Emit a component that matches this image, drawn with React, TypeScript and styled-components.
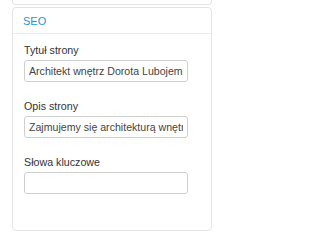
import React from "react"
import styled, { createGlobalStyle } from "styled-components"

const GlobalStyle = createGlobalStyle`
    html, body {
        margin: 0;
        padding: 0;
        background-color: #ffffff;
        font-family: "Liberation Sans", Arial, sans-serif;
    }
`

const Column = styled.div`
    width: 200px;
    padding-left: 12px;
    display: flex;
    flex-direction: column;
    gap: 2px;
`

const PrevPanel = styled.div`
    height: 4px;
    border: 1px solid #e4e4e4;
    border-top: none;
    border-radius: 0 0 4px 4px;
    background-color: #fff;
`

const Panel = styled.div`
    border: 1px solid #e4e4e4;
    border-radius: 4px;
    background-color: #fff;
`

const PanelHeading = styled.div`
    height: 25px;
    display: flex;
    align-items: center;
    padding: 0 10px;
    border-bottom: 1px solid #ececec;
    color: #2196dc;
    font-size: 11px;
`

const PanelBody = styled.div`
    padding: 8px 11px 20px;
`

const FormGroup = styled.div`
    margin-bottom: 16px;
`

const Label = styled.div`
    font-size: 10.7px;
    line-height: 16px;
    color: #333;
    margin-bottom: 2px;
`

const Input = styled.input`
    display: block;
    box-sizing: border-box;
    width: 164px;
    height: 22px;
    padding: 0 4px;
    border: 1px solid #cfcfcf;
    border-radius: 3px;
    font-family: "Liberation Sans", Arial, sans-serif;
    font-size: 10.6px;
    color: #444;
    background-color: #fff;
    outline: none;
`

const fields = [
    { label: "Tytuł strony", value: "Architekt wnętrz Dorota Lubojemska" },
    { label: "Opis strony", value: "Zajmujemy się architekturą wnętrz" },
    { label: "Słowa kluczowe", value: "" },
]

export default function App() {
    return (
        <>
            <GlobalStyle />
            <Column>
                <PrevPanel />
                <Panel>
                    <PanelHeading>SEO</PanelHeading>
                    <PanelBody>
                        {fields.map((f) => (
                            <FormGroup key={f.label}>
                                <Label>{f.label}</Label>
                                <Input defaultValue={f.value} readOnly />
                            </FormGroup>
                        ))}
                    </PanelBody>
                </Panel>
            </Column>
        </>
    )
}
